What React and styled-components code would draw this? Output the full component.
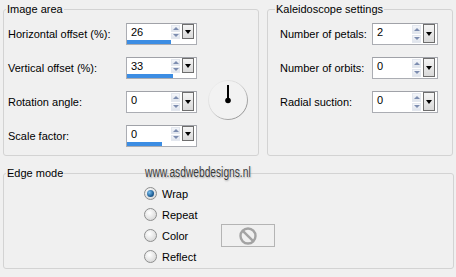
import React from "react";
import styled, { createGlobalStyle } from "styled-components";

const GlobalStyle = createGlobalStyle`
  html, body {
    margin: 0;
    padding: 0;
    background: #f0f0f0;
  }
  body {
    font-family: "Liberation Sans", Arial, sans-serif;
    font-size: 11px;
    color: #000;
  }
`;

const imageRows = [
  { label: "Horizontal offset (%):", value: "26", bar: 44 },
  { label: "Vertical offset (%):", value: "33", bar: 46 },
  { label: "Rotation angle:", value: "0" },
  { label: "Scale factor:", value: "0", bar: 35 },
];

const kaleidoRows = [
  { label: "Number of petals:", value: "2" },
  { label: "Number of orbits:", value: "0" },
  { label: "Radial suction:", value: "0" },
];

const edgeModes = ["Wrap", "Repeat", "Color", "Reflect"];

function SpinControl({ value, bar, width }) {
  return (
    <Control $w={width}>
      <ControlMain>
        <Value>{value}</Value>
        <Spinner>
          <SpinHalf />
          <SpinHalf $down />
        </Spinner>
        <DropBtn />
      </ControlMain>
      {bar !== undefined && (
        <BarTrack>
          <Bar style={{ width: bar }} />
        </BarTrack>
      )}
    </Control>
  );
}

function Dial() {
  return (
    <DialWrap>
      <svg width="42" height="42" viewBox="0 0 42 42">
        <defs>
          <linearGradient id="dialRim" x1="0" y1="0" x2="1" y2="1">
            <stop offset="0" stopColor="#f4f4f4" />
            <stop offset="0.45" stopColor="#d8d8d8" />
            <stop offset="1" stopColor="#7c7c7c" />
          </linearGradient>
        </defs>
        <circle cx="21" cy="21" r="19.5" fill="#f2f2f2" stroke="url(#dialRim)" strokeWidth="1" />
        <line x1="21" y1="6" x2="21" y2="21" stroke="#000" strokeWidth="2" />
        <circle cx="21" cy="21.5" r="2.8" fill="#000" />
      </svg>
    </DialWrap>
  );
}

function NoColorIcon() {
  return (
    <svg width="20" height="20" viewBox="0 0 20 20">
      <circle cx="10" cy="10" r="7.5" fill="none" stroke="#a3a3a3" strokeWidth="2.4" />
      <line x1="4.8" y1="4.8" x2="15.2" y2="15.2" stroke="#a3a3a3" strokeWidth="2.4" />
    </svg>
  );
}

export default function App() {
  return (
    <Window>
      <GlobalStyle />
      <TopRow>
        <Group $w={256} $h={154}>
          <Legend $ml={2}>Image area</Legend>
          <FormGrid $pl={4} $label={118}>
            {imageRows.map((r, i) => (
              <React.Fragment key={r.label}>
                <Label>{r.label}</Label>
                <SpinControl value={r.value} bar={r.bar} width={71} />
                {i === 2 ? <Dial /> : <span />}
              </React.Fragment>
            ))}
          </FormGrid>
        </Group>
        <Group $w={186} $h={154}>
          <Legend $ml={7}>Kaleidoscope settings</Legend>
          <FormGrid $pl={12} $label={92}>
            {kaleidoRows.map((r) => (
              <React.Fragment key={r.label}>
                <Label>{r.label}</Label>
                <SpinControl value={r.value} width={66} />
                <span />
              </React.Fragment>
            ))}
          </FormGrid>
        </Group>
      </TopRow>
      <EdgeGroup $w={451} $h={103}>
        <Legend $ml={2}>Edge mode</Legend>
        <RadioList>
          {edgeModes.map((m, i) => (
            <RadioRow key={m}>
              <RadioCircle $checked={i === 0} />
              <RadioLabel>{m}</RadioLabel>
              {m === "Color" && (
                <Swatch>
                  <NoColorIcon />
                </Swatch>
              )}
            </RadioRow>
          ))}
        </RadioList>
      </EdgeGroup>
      <Watermark>www.asdwebdesigns.nl</Watermark>
    </Window>
  );
}

const Window = styled.div`
  position: relative;
  width: 456px;
  height: 277px;
  box-sizing: border-box;
  padding: 2px 0 0 3px;
  overflow: hidden;
  background: #f0f0f0;
`;

const TopRow = styled.div`
  display: flex;
  gap: 8px;
`;

const Group = styled.fieldset`
  margin: 0;
  padding: 0;
  min-width: 0;
  box-sizing: border-box;
  width: ${(p) => p.$w}px;
  height: ${(p) => p.$h}px;
  border: 1px solid #d3d3d3;
  border-radius: 3px;
`;

const EdgeGroup = styled(Group)`
  margin-top: 10px;
`;

const Legend = styled.legend`
  margin-left: ${(p) => p.$ml}px;
  padding: 0 1px;
  font-size: 11px;
  line-height: 14px;
  color: #000;
`;

const FormGrid = styled.div`
  display: grid;
  grid-template-columns: ${(p) => p.$label}px auto 1fr;
  grid-auto-rows: 22px;
  row-gap: 12px;
  align-items: center;
  padding: 7px 0 0 ${(p) => p.$pl}px;
`;

const Label = styled.div`
  font-size: 11px;
  white-space: nowrap;
`;

const Control = styled.div`
  display: flex;
  flex-direction: column;
  width: ${(p) => p.$w}px;
  height: 22px;
  box-sizing: border-box;
  border: 1px solid #abadb3;
  border-top-color: #a0a2a8;
  background: #fff;
`;

const ControlMain = styled.div`
  flex: 1;
  display: flex;
  min-height: 0;
  padding-right: 2px;
`;

const Value = styled.div`
  flex: 1;
  padding: 2px 0 0 4px;
  font-size: 11px;
  line-height: 13px;
`;

const Spinner = styled.div`
  width: 9px;
  display: flex;
  flex-direction: column;
  gap: 1px;
  padding: 1px 1px 1px 0;
`;

const SpinHalf = styled.div`
  flex: 1;
  display: flex;
  align-items: center;
  justify-content: center;
  background: linear-gradient(#f4f6fa, #dfe4ec);
  border: 1px solid #e3e7ee;
  &::after {
    content: "";
    border-left: 3px solid transparent;
    border-right: 3px solid transparent;
    ${(p) => (p.$down ? "border-top" : "border-bottom")}: 3px solid #7d8db0;
  }
`;

const DropBtn = styled.div`
  width: 12px;
  box-sizing: border-box;
  margin: 0 0 1px 1px;
  display: flex;
  align-items: center;
  justify-content: center;
  border: 1px solid #6e6e6e;
  background: linear-gradient(#f5f5f5, #d9d9d9);
  &::after {
    content: "";
    border-left: 3.5px solid transparent;
    border-right: 3.5px solid transparent;
    border-top: 4px solid #000;
  }
`;

const BarTrack = styled.div`
  height: 4px;
`;

const Bar = styled.div`
  height: 100%;
  background: #3c8de3;
`;

const DialWrap = styled.div`
  align-self: start;
  margin: -12px 0 0 10px;
  width: 42px;
  height: 42px;
`;

const RadioList = styled.div`
  display: flex;
  flex-direction: column;
  padding: 3px 0 0 140px;
`;

const RadioRow = styled.div`
  display: flex;
  align-items: center;
  height: 21px;
`;

const RadioCircle = styled.span`
  width: 13px;
  height: 13px;
  box-sizing: border-box;
  border-radius: 50%;
  border: 1px solid #8e8f8f;
  background: radial-gradient(circle at 40% 35%, #ffffff, #e2e2e2 60%, #cfcfcf);
  display: flex;
  align-items: center;
  justify-content: center;
  &::after {
    content: "";
    display: ${(p) => (p.$checked ? "block" : "none")};
    width: 7px;
    height: 7px;
    border-radius: 50%;
    background: radial-gradient(circle at 35% 35%, #7cc0f0, #1f5f96 60%, #123b64);
  }
`;

const RadioLabel = styled.span`
  margin-left: 5px;
  font-size: 11px;
`;

const Swatch = styled.div`
  margin-left: 33px;
  width: 54px;
  height: 23px;
  flex-shrink: 0;
  box-sizing: border-box;
  border: 1px solid #b4b4b4;
  background: #f0f0f0;
  display: flex;
  align-items: center;
  justify-content: center;
`;

const Watermark = styled.div`
  position: absolute;
  left: 145px;
  top: 164px;
  font-family: "Liberation Sans", Arial, sans-serif;
  font-size: 14px;
  line-height: 16px;
  color: #3a3a3a;
  white-space: nowrap;
  transform: scaleX(0.73);
  transform-origin: left top;
  text-shadow: 0 0 2px #fff, 1px 1px 2px rgba(0, 0, 0, 0.35);
`;
